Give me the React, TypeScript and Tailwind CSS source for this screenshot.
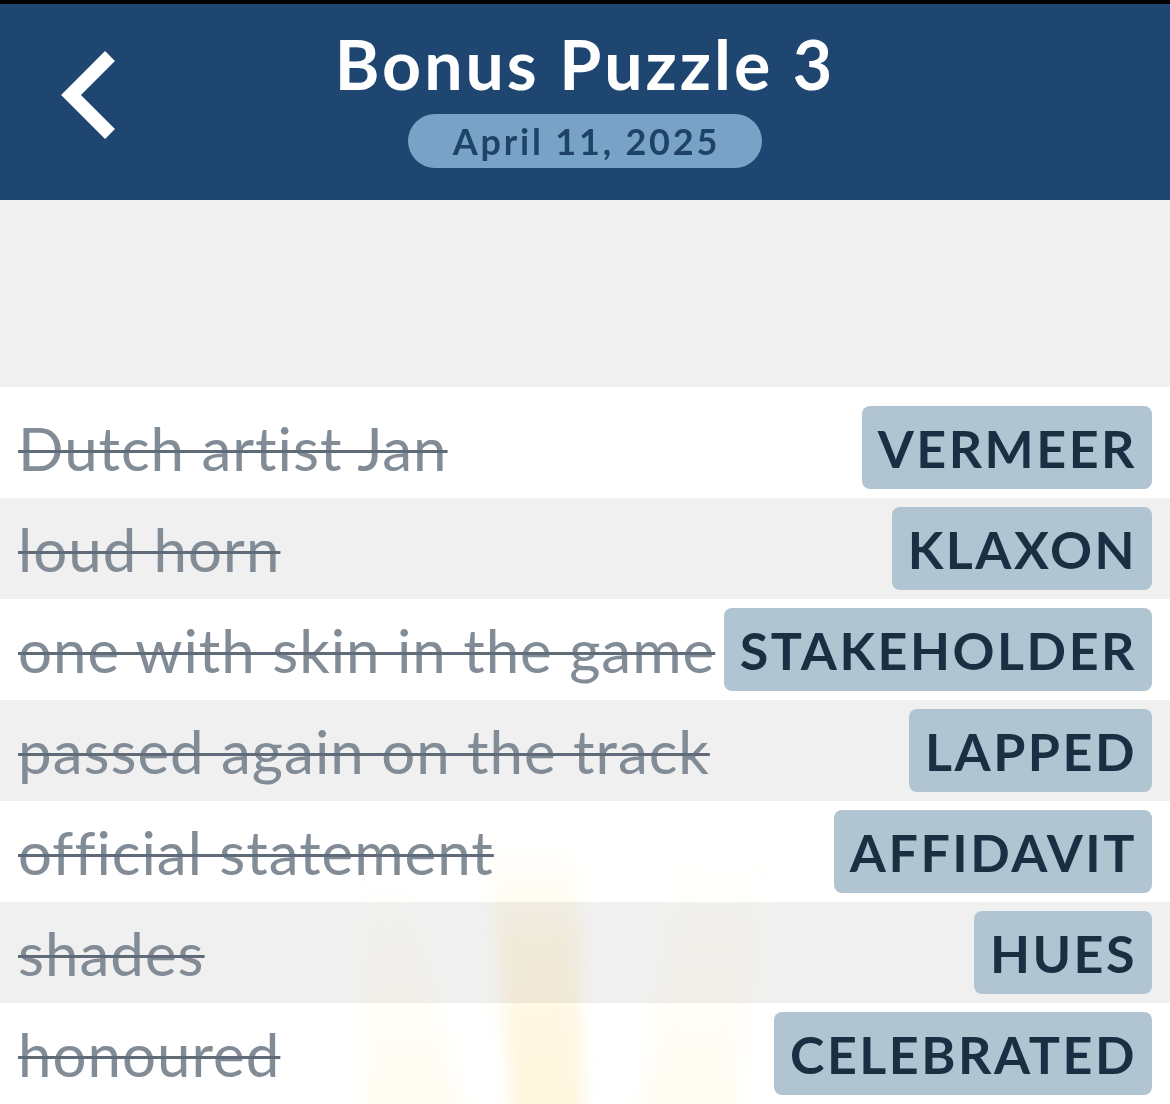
import React from "react";

type Clue = { clue: string; answer: string };

const clues: Clue[] = [
  { clue: "Dutch artist Jan", answer: "VERMEER" },
  { clue: "loud horn", answer: "KLAXON" },
  { clue: "one with skin in the game", answer: "STAKEHOLDER" },
  { clue: "passed again on the track", answer: "LAPPED" },
  { clue: "official statement", answer: "AFFIDAVIT" },
  { clue: "shades", answer: "HUES" },
  { clue: "honoured", answer: "CELEBRATED" },
];

const font = { fontFamily: "Lato, 'Noto Sans', sans-serif" };

const BackChevron: React.FC = () => (
  <svg width="75" height="100" viewBox="0 0 75 100" fill="none">
    <path d="M60 11 L21 50 L60 89" stroke="white" strokeWidth="14" strokeLinejoin="miter" />
  </svg>
);

// faint light beams behind the bottom rows
const Rays: React.FC = () => (
  <svg
    className="pointer-events-none absolute left-0 bottom-0 mix-blend-multiply"
    width="1170"
    height="300"
    viewBox="0 804 1170 300"
  >
    <defs>
      <linearGradient id="ray" x1="0" y1="0" x2="0" y2="1">
        <stop offset="0" stopColor="#ffe08a" stopOpacity="0" />
        <stop offset="0.35" stopColor="#ffe08a" stopOpacity="0.2" />
        <stop offset="1" stopColor="#ffe08a" stopOpacity="0.3" />
      </linearGradient>
      <linearGradient id="rayFaint" x1="0" y1="0" x2="0" y2="1">
        <stop offset="0" stopColor="#ffe08a" stopOpacity="0" />
        <stop offset="1" stopColor="#ffe08a" stopOpacity="0.13" />
      </linearGradient>
      <filter id="soft" x="-20%" y="-20%" width="140%" height="140%">
        <feGaussianBlur stdDeviation="9" />
      </filter>
    </defs>
    <g filter="url(#soft)">
      <polygon points="487,840 577,840 584,1120 513,1120" fill="url(#ray)" />
      <polygon points="360,880 410,880 465,1120 365,1120" fill="url(#rayFaint)" />
      <polygon points="675,850 770,850 735,1120 640,1120" fill="url(#rayFaint)" />
    </g>
  </svg>
);

export default function App() {
  return (
    <div className="w-[1170px] h-[1104px] overflow-hidden bg-white" style={font}>
      <div className="h-[4px] bg-black" />
      <header className="h-[196px] bg-[#1e4670] grid grid-cols-[1fr_auto_1fr]">
        <div className="pl-[50px] pt-[41px]">
          <BackChevron />
        </div>
        <div className="flex flex-col items-center pt-[26px]">
          <h1 className="text-[68px] leading-none font-bold text-white tracking-[3px]">Bonus Puzzle 3</h1>
          <div className="mt-[16px] h-[54px] pl-[45px] pr-[42px] rounded-full bg-[#79a3c6] flex items-center">
            <span className="text-[36px] leading-none font-bold text-[#1f4268] tracking-[2.8px]">April 11, 2025</span>
          </div>
        </div>
        <div />
      </header>
      <div className="h-[187px] bg-[#f0f0f0]" />
      <div className="relative pt-[10px] bg-white">
        {clues.map((c, i) => (
          <div
            key={c.answer}
            className={
              "h-[101px] flex items-center justify-between pl-[18px] pr-[18px] " +
              (i % 2 === 1 ? "bg-[#f0f0f0]" : "bg-white")
            }
          >
            <span className="text-[60px] leading-none whitespace-nowrap tracking-[1px] text-[#828c96] line-through decoration-[3px] decoration-[#5f6b78]">
              {c.clue}
            </span>
            <span className="h-[83px] flex items-center pl-[16px] pr-[15px] rounded-[8px] bg-[#b1c4d2] text-[52px] leading-none font-bold tracking-[2.5px] text-[#1b2f42] whitespace-nowrap">
              {c.answer}
            </span>
          </div>
        ))}
        <Rays />
      </div>
    </div>
  );
}
